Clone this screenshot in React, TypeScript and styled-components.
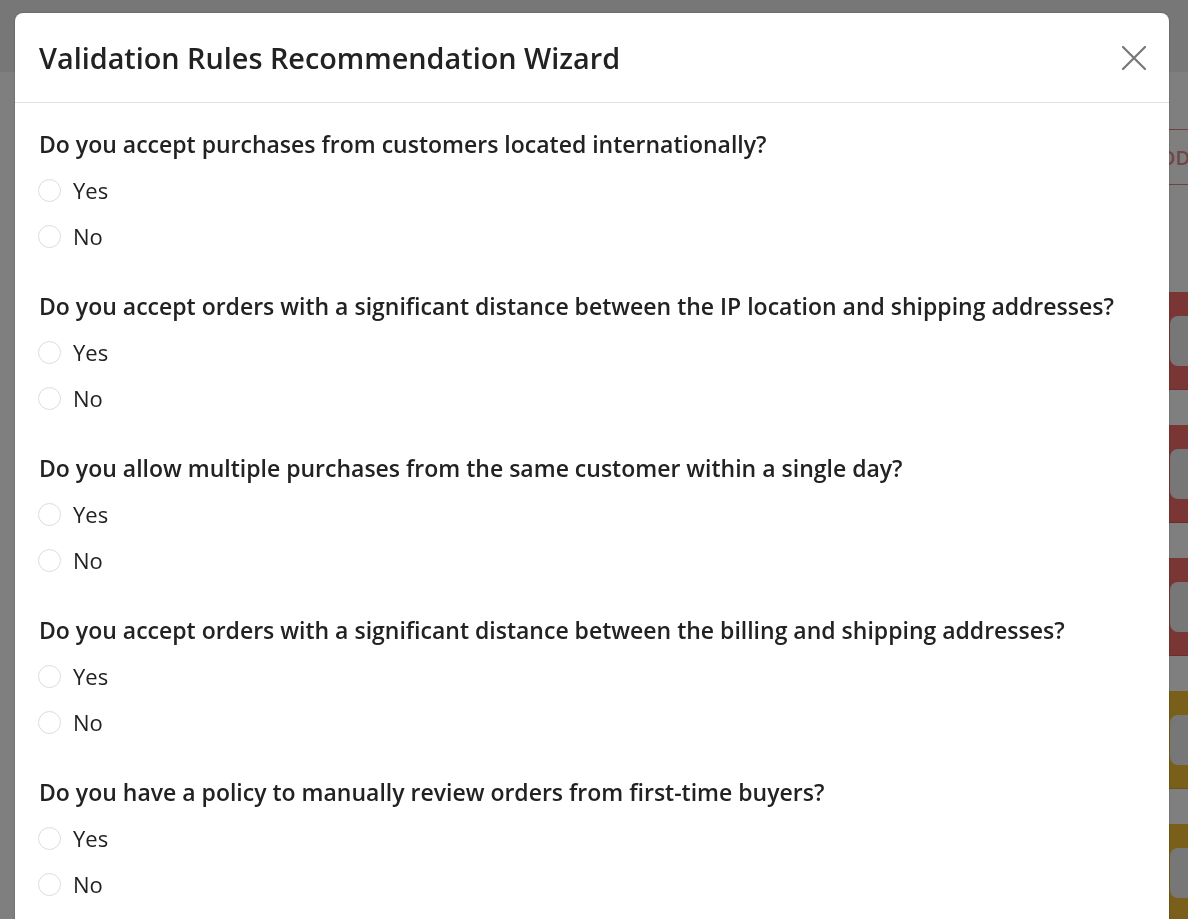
import * as React from 'react';
import styled, { createGlobalStyle } from 'styled-components';

const GlobalStyle = createGlobalStyle`
	html, body {
		margin: 0;
		padding: 0;
		height: 100%;
		overflow: hidden;
	}
	body {
		font-family: 'Open Sans', 'Noto Sans', sans-serif;
		color: #222;
		background: #fff;
	}
`;

// page that sits behind the dialog
const Page = styled.div`
	width: 1188px;
	height: 919px;
	display: flex;
	flex-direction: column;
`;

const TopBar = styled.div`
	height: 72px;
	flex: 0 0 72px;
	background: #eeeeee;
`;

const Content = styled.div`
	display: grid;
	grid-template-columns: 1fr 80px;
`;

const Side = styled.div`
	display: flex;
	flex-direction: column;
	padding-top: 57px;
`;

const OutlineButton = styled.div`
	height: 56px;
	box-sizing: border-box;
	border-top: 1px solid #e58585;
	border-bottom: 1px solid #e58585;
	display: flex;
	align-items: center;
	padding-left: 39px;
	font-size: 20px;
	font-weight: 600;
	color: #e08a8a;
	white-space: nowrap;
	margin-bottom: 107px;
`;

const Rows = styled.div`
	display: flex;
	flex-direction: column;
	gap: 35px;
`;

const StatusCell = styled.div<{ $tone: 'red' | 'yellow' }>`
	height: 98px;
	box-sizing: border-box;
	padding: 24px 0 24px 62px;
	background: ${(p) => (p.$tone === 'red' ? '#f46a6a' : '#f4be34')};
	border-bottom: 1px solid rgba(0, 0, 0, 0.12);
`;

const Pill = styled.div`
	height: 50px;
	border-radius: 8px 0 0 8px;
	background: #eeeeee;
`;

// dialog
const Overlay = styled.div`
	position: fixed;
	inset: 0;
	background: rgba(0, 0, 0, 0.5);
	overflow: hidden;
	padding: 13px 0 0 15px;
`;

const Dialog = styled.div`
	width: 1154px;
	background: #fff;
	border-radius: 8px 8px 0 0;
	box-shadow: 0 0 2px rgba(0, 0, 0, 0.35);
`;

const Header = styled.div`
	height: 90px;
	box-sizing: border-box;
	display: flex;
	align-items: center;
	justify-content: space-between;
	padding: 1px 23px 0 24px;
	border-bottom: 1px solid #e2e2e2;
`;

const Title = styled.h1`
	margin: 0;
	font-size: 28.8px;
	font-weight: 600;
	line-height: 34px;
	color: #222;
`;

const CloseButton = styled.button`
	width: 24px;
	height: 24px;
	padding: 0;
	border: none;
	background: none;
	display: flex;
	align-items: center;
	justify-content: center;
	cursor: pointer;
`;

const Body = styled.div`
	padding: 18px 24px 40px 24px;
	display: flex;
	flex-direction: column;
	gap: 24px;
`;

const Question = styled.fieldset`
	margin: 0;
	padding: 0;
	border: none;
	display: flex;
	flex-direction: column;
`;

const QuestionText = styled.legend`
	padding: 0;
	height: 46px;
	display: flex;
	align-items: center;
	font-size: 23px;
	font-weight: 600;
	color: #222;
	float: left;
	width: 100%;
`;

const Option = styled.label`
	height: 46px;
	display: flex;
	align-items: center;
	gap: 12px;
	font-size: 22px;
	color: #222;
	cursor: pointer;
`;

const Radio = styled.input`
	appearance: none;
	margin: 0 0 0 -1px;
	width: 23px;
	height: 23px;
	box-sizing: border-box;
	border: 1px solid #dcdcdc;
	border-radius: 50%;
	background: #fff;
	cursor: pointer;

	&:checked {
		border: 7px solid #3b82f6;
	}
`;

const questions = [
	'Do you accept purchases from customers located internationally?',
	'Do you accept orders with a significant distance between the IP location and shipping addresses?',
	'Do you allow multiple purchases from the same customer within a single day?',
	'Do you accept orders with a significant distance between the billing and shipping addresses?',
	'Do you have a policy to manually review orders from first-time buyers?',
];

const tones: ('red' | 'yellow')[] = ['red', 'red', 'red', 'yellow', 'yellow'];

function CloseIcon() {
	return (
		<svg width='24' height='24' viewBox='0 0 24 24'>
			<path d='M1 1 L23 23 M23 1 L1 23' stroke='#777' strokeWidth='2.2' strokeLinecap='round' fill='none' />
		</svg>
	);
}

export default function App() {
	const [answers, setAnswers] = React.useState<Record<number, string>>({});

	return (
		<>
			<GlobalStyle />
			<Page>
				<TopBar />
				<Content>
					<div />
					<Side>
						<OutlineButton>CODE</OutlineButton>
						<Rows>
							{tones.map((t, i) => (
								<StatusCell key={i} $tone={t}>
									<Pill />
								</StatusCell>
							))}
						</Rows>
					</Side>
				</Content>
			</Page>
			<Overlay>
				<Dialog>
					<Header>
						<Title>Validation Rules Recommendation Wizard</Title>
						<CloseButton aria-label='Close'>
							<CloseIcon />
						</CloseButton>
					</Header>
					<Body>
						{questions.map((q, i) => (
							<Question key={i}>
								<QuestionText>{q}</QuestionText>
								{['Yes', 'No'].map((opt) => (
									<Option key={opt}>
										<Radio
											type='radio'
											name={'q' + i}
											checked={answers[i] === opt}
											onChange={() => setAnswers({ ...answers, [i]: opt })}
										/>
										{opt}
									</Option>
								))}
							</Question>
						))}
					</Body>
				</Dialog>
			</Overlay>
		</>
	);
}
